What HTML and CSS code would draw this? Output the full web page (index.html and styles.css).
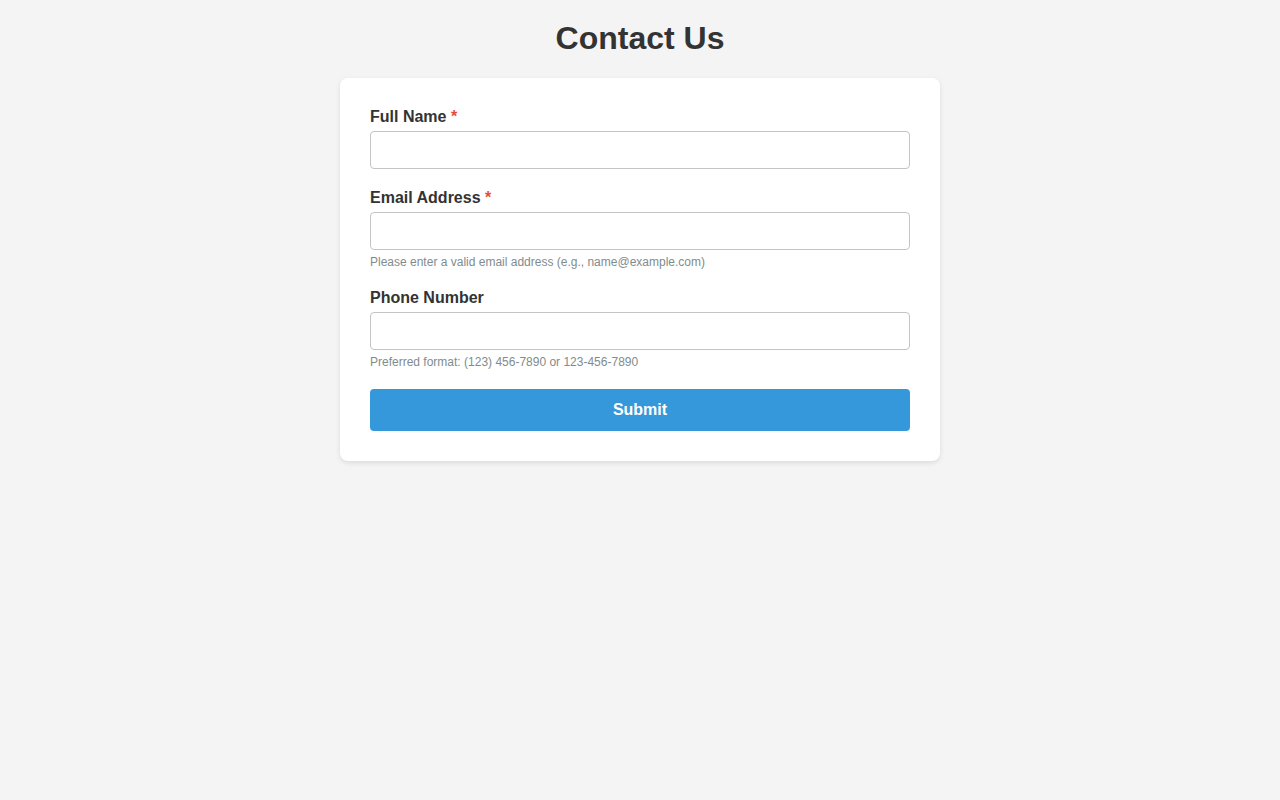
FILE: index.html
```html
<!doctype html>
<html lang="en">
<head>
    <meta charset="utf-8">
    <title>Contact Us</title>
    <link rel="stylesheet" href="styles.css">
</head>
<body>

<h1 class="page-title">Contact Us</h1>

<!-- Contact form -->
<form class="contact-card" onsubmit="return false;">
    <div class="form-group">
        <label for="fullName">Full Name <span class="required">*</span></label>
        <input type="text" id="fullName" class="form-input">
    </div>

    <div class="form-group">
        <label for="email">Email Address <span class="required">*</span></label>
        <input type="email" id="email" class="form-input">
        <small class="help-text">Please enter a valid email address (e.g., name@example.com)</small>
    </div>

    <div class="form-group">
        <label for="phone">Phone Number</label>
        <input type="tel" id="phone" class="form-input">
        <small class="help-text">Preferred format: (123) 456-7890 or 123-456-7890</small>
    </div>

    <button type="submit" class="btn-submit">Submit</button>
</form>

</body>
</html>
```

FILE: styles.css
```css
/* Page */
body {
    margin: 0;
    padding: 20px;
    background-color: #f4f4f4;
    font-family: "Liberation Sans", Arial, sans-serif;
    color: #333;
}

.page-title {
    text-align: center;
    font-size: 32px;
    margin: 0 0 21px;
    color: #333;
}

/* Card */
.contact-card {
    width: 600px;
    box-sizing: border-box;
    margin: 0 auto;
    padding: 30px;
    background-color: #fff;
    border-radius: 8px;
    box-shadow: 0 2px 5px rgba(0, 0, 0, 0.1);
}

.form-group {
    margin-bottom: 20px;
}

.form-group label {
    display: block;
    font-size: 16px;
    font-weight: bold;
    margin-bottom: 5px;
    color: #333;
}

.required {
    color: #e74c3c;
}

.form-input {
    display: block;
    width: 100%;
    box-sizing: border-box;
    height: 38px;
    padding: 10px;
    font-size: 14px;
    font-family: inherit;
    border: 1px solid #c4c4c4;
    border-radius: 4px;
    background: #fff;
}

.help-text {
    display: block;
    margin-top: 5px;
    font-size: 12px;
    color: #7f8c8d;
}

.btn-submit {
    display: block;
    width: 100%;
    padding: 12px;
    font-size: 16px;
    font-weight: bold;
    font-family: inherit;
    color: #fff;
    background-color: #3498db;
    border: none;
    border-radius: 4px;
    cursor: pointer;
}
```
